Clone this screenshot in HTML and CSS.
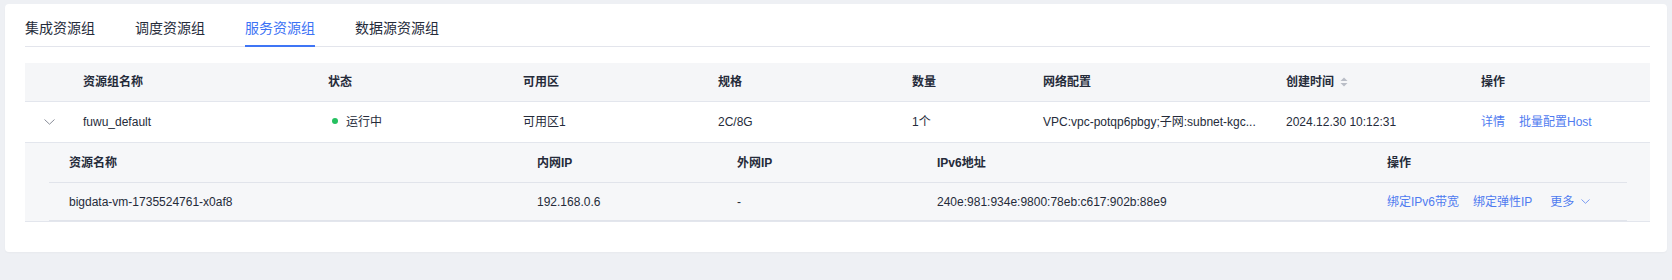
FILE: index.html
```html
<!DOCTYPE html>
<html lang="zh-CN">
<head>
<meta charset="utf-8">
<title>服务资源组</title>
<link rel="stylesheet" href="styles.css">
</head>
<body>
<div class="page">
  <div class="card">
    <div class="tabs">
      <div class="tab">集成资源组</div>
      <div class="tab">调度资源组</div>
      <div class="tab active">服务资源组</div>
      <div class="tab">数据源资源组</div>
    </div>

    <div class="table">
      <div class="row head">
        <div class="cell"></div>
        <div class="cell">资源组名称</div>
        <div class="cell">状态</div>
        <div class="cell">可用区</div>
        <div class="cell">规格</div>
        <div class="cell">数量</div>
        <div class="cell">网络配置</div>
        <div class="cell">创建时间
          <svg class="sort" width="8" height="10" viewBox="0 0 8 10"><path d="M4 0.5 L7.5 4 L0.5 4 Z" fill="#b9bdc6"/><path d="M4 9.5 L7.5 6 L0.5 6 Z" fill="#b9bdc6"/></svg>
        </div>
        <div class="cell">操作</div>
      </div>

      <div class="row body">
        <div class="cell arrow-cell">
          <svg class="chev" width="11" height="6" viewBox="0 0 11 6"><path d="M0.5 0.5 L5.5 5.2 L10.5 0.5" fill="none" stroke="#8a8e99" stroke-width="1"/></svg>
        </div>
        <div class="cell">fuwu_default</div>
        <div class="cell status"><span class="dot"></span>运行中</div>
        <div class="cell">可用区1</div>
        <div class="cell">2C/8G</div>
        <div class="cell">1个</div>
        <div class="cell">VPC:vpc-potqp6pbgy;子网:subnet-kgc...</div>
        <div class="cell">2024.12.30 10:12:31</div>
        <div class="cell links"><a class="link">详情</a><a class="link">批量配置Host</a></div>
      </div>

      <div class="expand">
        <div class="sub">
          <div class="subrow subhead">
            <div class="cell first">资源名称</div>
            <div class="cell">内网IP</div>
            <div class="cell">外网IP</div>
            <div class="cell">IPv6地址</div>
            <div class="cell">操作</div>
          </div>
          <div class="subrow subbody">
            <div class="cell first">bigdata-vm-1735524761-x0af8</div>
            <div class="cell">192.168.0.6</div>
            <div class="cell">-</div>
            <div class="cell">240e:981:934e:9800:78eb:c617:902b:88e9</div>
            <div class="cell links sublinks">
              <a class="link">绑定IPv6带宽</a><a class="link">绑定弹性IP</a><a class="link more">更多<svg class="more-chev" width="9" height="5" viewBox="0 0 9 5"><path d="M0.5 0.5 L4.5 4.3 L8.5 0.5" fill="none" stroke="#7a9cf2" stroke-width="1"/></svg></a>
            </div>
          </div>
        </div>
      </div>
    </div>
  </div>
</div>
</body>
</html>
```

FILE: styles.css
```css
* {
  box-sizing: border-box;
}

html, body {
  margin: 0;
  padding: 0;
  background: #eef0f4;
}

body {
  font-family: "Liberation Sans", "Noto Sans CJK SC", sans-serif;
  color: #252b3a;
  width: 1672px;
  height: 280px;
  overflow: hidden;
}

.page {
  padding: 4px 5px 0 5px;
}

.card {
  background: #ffffff;
  border-radius: 4px;
  padding: 0 17px 30px 20px;
  box-shadow: 0 1px 2px rgba(0, 0, 0, 0.03);
}

/* Tabs */
.tabs {
  display: flex;
  gap: 40px;
  border-bottom: 1px solid #e3e5ec;
}

.tab {
  font-size: 14px;
  line-height: 20px;
  padding: 14px 0 7px 0;
  border-bottom: 2px solid transparent;
  margin-bottom: -1px;
  color: #252b3a;
  white-space: nowrap;
}

.tab.active {
  color: #3c72f5;
  border-bottom-color: #3f75f5;
}

/* Main table */
.table {
  margin-top: 16px;
  font-size: 12px;
}

.row {
  display: grid;
  grid-template-columns: 58px 245px 195px 195px 194px 131px 243px 195px 1fr;
  align-items: center;
  border-bottom: 1px solid #e3e6ed;
}

.row.head {
  background: #f5f6f8;
  height: 39px;
  font-weight: 600;
  color: #252b3a;
}

.row.body {
  height: 41px;
  background: #ffffff;
}

.cell {
  line-height: 20px;
  white-space: nowrap;
  display: flex;
  align-items: center;
}

.sort {
  margin-left: 6px;
}

.arrow-cell {
  padding-left: 19px;
}

.status .dot {
  width: 6px;
  height: 6px;
  border-radius: 50%;
  background: #25c060;
  margin-left: 4px;
  margin-right: 8px;
  margin-top: -2px;
}

.links {
  gap: 14px;
}

.link {
  color: #4f7bf0;
  cursor: pointer;
}

/* Expanded area */
.expand {
  background: #f6f7f9;
  border-bottom: 1px solid #e3e6ed;
  padding: 0 23px 0 24px;
}

.subrow {
  display: grid;
  grid-template-columns: 488px 200px 200px 450px 1fr;
  align-items: center;
  border-bottom: 1px solid #e1e4eb;
}

.subrow .first {
  padding-left: 20px;
}

.subhead {
  height: 40px;
  font-weight: 600;
}

.subbody {
  height: 38px;
}

.sublinks a:nth-child(2) {
  margin-right: 4px;
}

.more {
  display: inline-flex;
  align-items: center;
}

.more-chev {
  margin-left: 7px;
}
```
